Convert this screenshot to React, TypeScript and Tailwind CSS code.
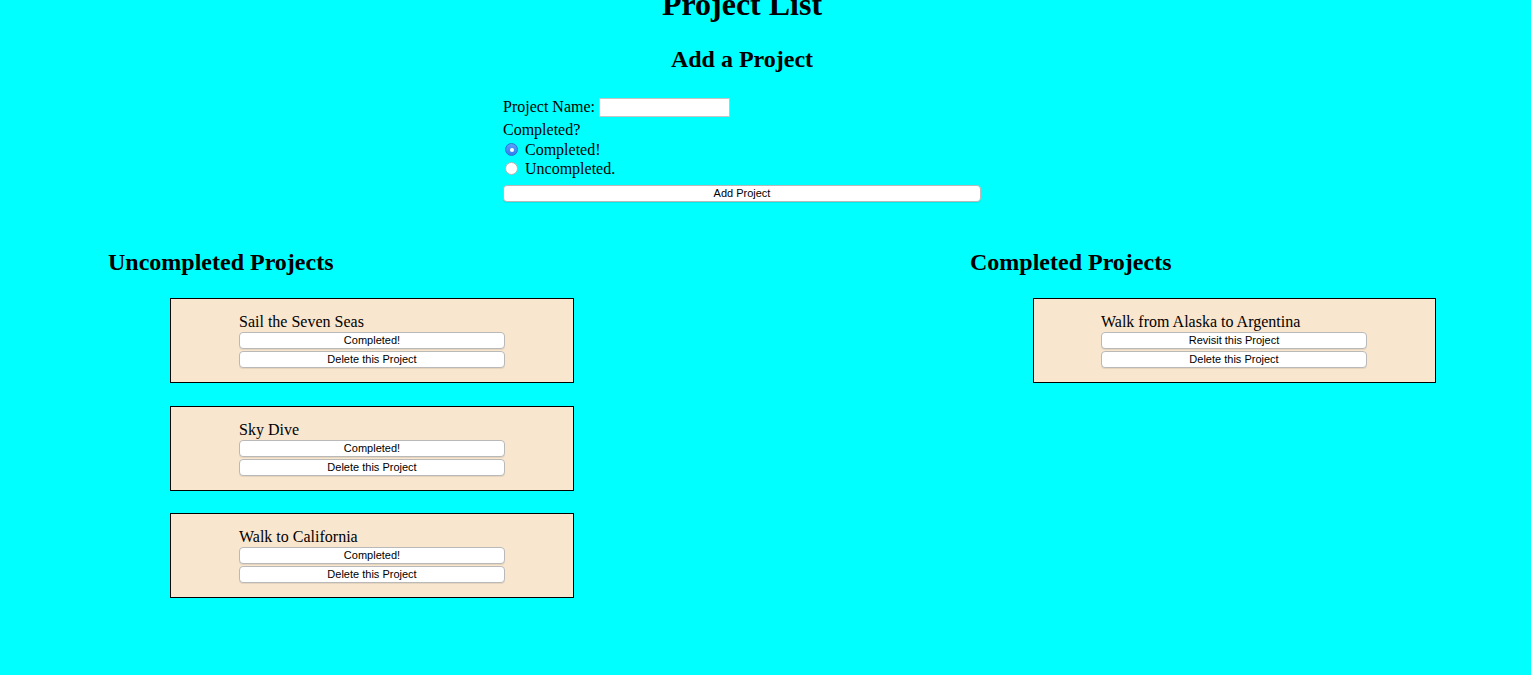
import React from "react";

const serif = { fontFamily: '"Liberation Serif", "Times New Roman", serif' };

function Btn({ children, className = "" }: { children: React.ReactNode; className?: string }) {
  return (
    <button
      className={`block h-[17px] bg-white border border-[#b9b9b9] rounded-[4px] text-[11px] leading-[15px] text-black text-center shadow-[0_1px_0_rgba(0,0,0,0.08)] ${className}`}
      style={{ fontFamily: '"Liberation Sans", Arial, sans-serif' }}
    >
      {children}
    </button>
  );
}

function Card({
  name,
  action,
  className = "ml-[62px] w-[404px] pl-[68px]",
}: {
  name: string;
  action: string;
  className?: string;
}) {
  return (
    <div className={`${className} h-[85px] border border-black bg-[#f9e6cf] pt-[14px]`}>
      <div className="text-[16px] leading-[18px]">{name}</div>
      <div className="flex flex-col gap-[2px] mt-[1px]">
        <Btn className="w-[266px]">{action}</Btn>
        <Btn className="w-[266px]">Delete this Project</Btn>
      </div>
    </div>
  );
}

function Radio({ checked }: { checked?: boolean }) {
  return checked ? (
    <span className="ml-[2px] w-[13px] h-[13px] rounded-full bg-gradient-to-b from-[#5aa1f8] to-[#2f7ef0] border border-[#2c72d8] flex items-center justify-center">
      <span className="w-[4px] h-[4px] rounded-full bg-white" />
    </span>
  ) : (
    <span className="ml-[2px] w-[13px] h-[13px] rounded-full bg-white border border-[#b3b3b3]" />
  );
}

export default function App() {
  return (
    <div className="w-full min-h-[675px] bg-[#00ffff] text-black overflow-hidden" style={serif}>
      <div className="w-[1484px]">
        <h1 className="text-[32px] font-bold text-center leading-[37px] mt-[-14px]">Project List</h1>
        <h2 className="text-[24px] font-bold text-center leading-[28px] mt-[22px]">Add a Project</h2>
        <div className="w-[478px] mx-auto mt-[24px]">
          <div className="flex items-center h-[21px] text-[16px] leading-[18px]">
            <span className="-mt-[1px]">Project Name:</span>
            <input className="ml-[4px] w-[131px] h-[19px] bg-white border border-[#c4c4c4] outline-none" />
          </div>
          <div className="text-[16px] leading-[18px] mt-[3px]">Completed?</div>
          <div className="flex items-center h-[19px] mt-[1px] text-[16px] leading-[18px]">
            <Radio checked />
            <span className="ml-[7px]">Completed!</span>
          </div>
          <div className="flex items-center h-[19px] text-[16px] leading-[18px]">
            <Radio />
            <span className="ml-[7px]">Uncompleted.</span>
          </div>
          <Btn className="w-[478px] mt-[7px]">Add Project</Btn>
        </div>
        <div className="flex pl-[108px] mt-[46px]">
          <div className="w-[862px]">
            <h2 className="text-[24px] font-bold leading-[28px]">Uncompleted Projects</h2>
            <div className="flex flex-col gap-[22.5px] mt-[22px]">
              <Card name="Sail the Seven Seas" action="Completed!" />
              <Card name="Sky Dive" action="Completed!" />
              <Card name="Walk to California" action="Completed!" />
            </div>
          </div>
          <div className="flex-1">
            <h2 className="text-[24px] font-bold leading-[28px]">Completed Projects</h2>
            <div className="flex flex-col gap-[22.5px] mt-[22px]">
              <Card
                name="Walk from Alaska to Argentina"
                action="Revisit this Project"
                className="ml-[63px] w-[403px] pl-[67px]"
              />
            </div>
          </div>
        </div>
      </div>
    </div>
  );
}
